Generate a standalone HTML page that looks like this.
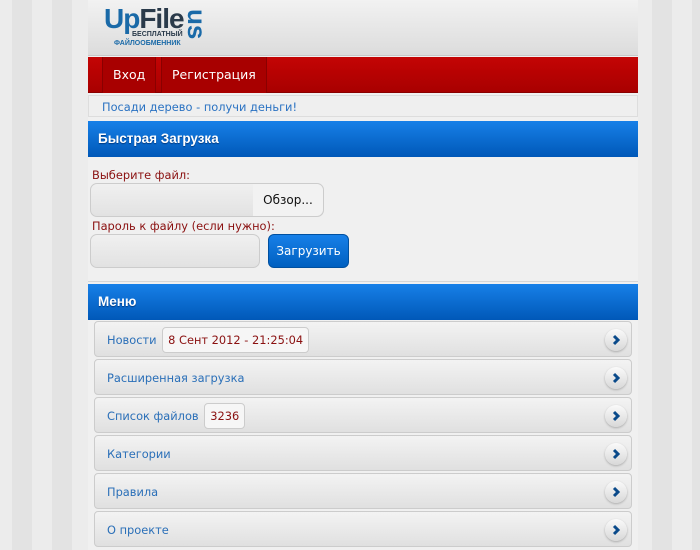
<!DOCTYPE html>
<html><head><meta charset="utf-8"><style>
*{margin:0;padding:0;box-sizing:border-box}
html,body{width:700px;height:550px;overflow:hidden}
body{font-family:"DejaVu Sans","Liberation Sans",sans-serif;font-size:11.4px;
background:linear-gradient(90deg,#ececec 0 12px,#e3e3e3 12px 32px,#ececec 32px 52px,#e3e3e3 52px 72px,#ececec 72px 88px,#f0f0f0 88px 638px,#ececec 638px 652px,#e3e3e3 652px 672px,#ececec 672px 692px,#e3e3e3 692px);position:relative}
#main{position:absolute;left:88px;top:0;width:550px;height:550px;background:#f0f0f0;overflow:hidden}
.hdr{height:56px;background:linear-gradient(#f2f2f2,#dcdcdc);border-bottom:1px solid #c8c8c8;position:relative;font-family:"Liberation Sans",sans-serif}
.logo{position:absolute;left:16px;top:3px;font-size:28px;font-weight:bold;letter-spacing:-1px}
.nav{position:absolute;top:57px;left:0;width:550px;height:36px;background:linear-gradient(#c40404,#a80000);border-bottom:1px solid #8a0000}
.nav span{position:absolute;top:0;height:36px;line-height:36px;color:#fff;font-size:12.5px;padding:0 10px;background:#a80000;border-left:1px solid #8a0000;border-right:1px solid #8a0000}
.note{position:absolute;top:95px;left:0;width:550px;height:22px;background:#efefef;border:1px solid #ddd;line-height:22px;padding-left:13px;color:#2a72c2}
.bar{position:absolute;left:0;width:550px;height:36px;background:linear-gradient(#1780e8,#0058b8);color:#fff;font-weight:bold;font-size:13.5px;line-height:36px;padding-left:10px;text-shadow:0 1px 1px #003a80;font-family:"Liberation Sans",sans-serif}
.lbl{position:absolute;left:4px;color:#8a1010}
.inp{position:absolute;border:1px solid #ccc;border-radius:7px;background:linear-gradient(#f0f0f0,#e2e2e2)}
.item{position:absolute;left:6px;width:538px;height:36px;border:1px solid #ccc;border-radius:4px;background:linear-gradient(#f3f3f3,#e0e0e0);color:#2a6fb8;line-height:36px;padding-left:12px}
.cnt{display:inline-block;border:1px solid #ccc;border-radius:4px;background:#f6f6f6;color:#8a1010;line-height:24px;padding:0 5px;margin-left:2px;vertical-align:middle;position:relative;top:-1px}
.arr{position:absolute;right:4px;top:7px;width:22px;height:22px;border-radius:50%;background:linear-gradient(#fafafa,#d8d8d8);box-shadow:0 1px 2px #aaa}
.arr svg{position:absolute;left:5px;top:5px}
</style></head><body>
<div id="main">
<div class="hdr">
 <div class="logo"><span style="color:#1a6aa8">Up</span><span style="color:#2a3a4a">File</span></div>
 <div style="position:absolute;left:44px;top:31px;font-size:7px;font-weight:bold;color:#2a3a4a">БЕСПЛАТНЫЙ</div>
 <div style="position:absolute;left:26px;top:40px;font-size:7px;font-weight:bold;color:#1a6aa8">ФАЙЛООБМЕННИК</div>
 <div style="position:absolute;top:9px;font-size:26px;font-weight:bold;color:#1a6aa8;transform:rotate(90deg);transform-origin:left top;left:124px">us</div>
</div>
<div class="nav"><span style="left:14px">Вход</span><span style="left:73px">Регистрация</span></div>
<div class="note">Посади дерево - получи деньги!</div>
<div class="bar" style="top:121px">Быстрая Загрузка</div>
<div class="lbl" style="top:168px">Выберите файл:</div>
<div class="inp" style="left:2px;top:183px;width:234px;height:34px;"><div style="position:absolute;right:0;top:0;width:70px;height:32px;background:#f2f2f2;border-radius:0 7px 7px 0;line-height:32px;text-align:center;font-size:12px;color:#111">Обзор...</div></div>
<div class="lbl" style="top:219px">Пароль к файлу (если нужно):</div>
<div class="inp" style="left:2px;top:234px;width:170px;height:34px"></div>
<div style="position:absolute;left:180px;top:234px;width:81px;height:34px;border-radius:6px;background:linear-gradient(#1780e8,#0060c0);border:1px solid #0050a0;color:#fff;font-size:12px;line-height:32px;text-align:center">Загрузить</div>
<div style="position:absolute;left:0;top:281px;width:550px;height:1px;background:#d6d6d6"></div>
<div class="bar" style="top:284px">Меню</div>
<div class="item" style="top:321px">Новости <span class="cnt">8 Сент 2012 - 21:25:04</span><div class="arr"><svg width="12" height="12"><path d="M4 2 L8 6 L4 10" stroke="#0a4a8a" stroke-width="3" fill="none"/></svg></div></div>
<div class="item" style="top:359px">Расширенная загрузка<div class="arr"><svg width="12" height="12"><path d="M4 2 L8 6 L4 10" stroke="#0a4a8a" stroke-width="3" fill="none"/></svg></div></div>
<div class="item" style="top:397px">Список файлов <span class="cnt">3236</span><div class="arr"><svg width="12" height="12"><path d="M4 2 L8 6 L4 10" stroke="#0a4a8a" stroke-width="3" fill="none"/></svg></div></div>
<div class="item" style="top:435px">Категории<div class="arr"><svg width="12" height="12"><path d="M4 2 L8 6 L4 10" stroke="#0a4a8a" stroke-width="3" fill="none"/></svg></div></div>
<div class="item" style="top:473px">Правила<div class="arr"><svg width="12" height="12"><path d="M4 2 L8 6 L4 10" stroke="#0a4a8a" stroke-width="3" fill="none"/></svg></div></div>
<div class="item" style="top:511px">О проекте<div class="arr"><svg width="12" height="12"><path d="M4 2 L8 6 L4 10" stroke="#0a4a8a" stroke-width="3" fill="none"/></svg></div></div>
</div>
</body></html>
